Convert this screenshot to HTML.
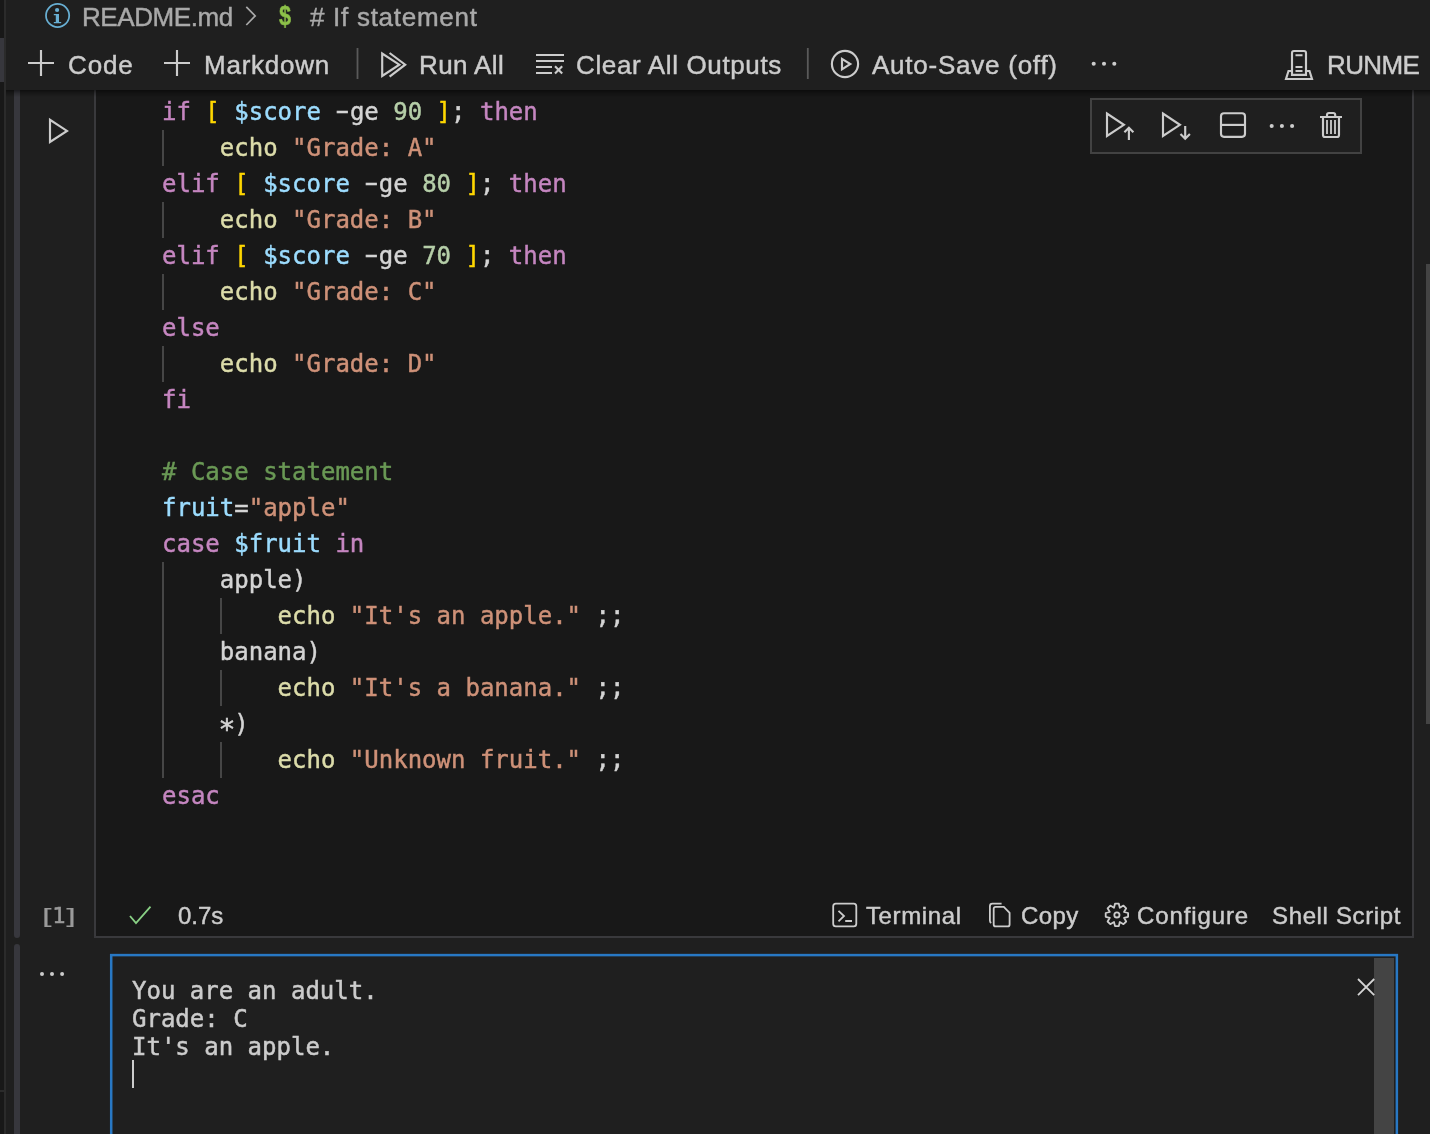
<!DOCTYPE html>
<html><head><meta charset="utf-8"><title>README.md</title>
<style>
*{box-sizing:border-box;margin:0;padding:0}
html,body{width:1430px;height:1134px;overflow:hidden;background:#1f1f1f}
body{position:relative;font-family:"Liberation Sans",sans-serif;color:#cccccc}
.abs{position:absolute}
.ui{will-change:transform;font-family:"Liberation Sans",sans-serif;-webkit-text-stroke:0.45px;font-size:26px;line-height:30px;color:#cccccc;white-space:pre;position:absolute;z-index:6}
.st{font-size:24px}
.mono{will-change:transform;font-family:"DejaVu Sans Mono","Liberation Mono",monospace}
#leftstrip{left:0;top:0;width:4px;height:1134px;background:#181818}
#leftborder{left:4px;top:0;width:2px;height:1134px;background:#2b2b2b}
#leftthumb{left:0;top:38px;width:4px;height:44px;background:#37373d}
#leftline{left:0;top:1090px;width:4px;height:2px;background:#2b2b2b}
#toolbar{left:6px;top:36px;width:1424px;height:53.5px;background:#1f1f1f;z-index:5}
#tshadow{left:6px;top:89.5px;width:1424px;height:7px;background:linear-gradient(rgba(0,0,0,.5),rgba(0,0,0,.22) 45%,rgba(0,0,0,0));z-index:5}
#celled{left:94px;top:80px;width:1320px;height:858px;background:#181818;border:2px solid #39393c}
#focus1{left:14px;top:80px;width:6px;height:858px;background:#37373d;border-radius:0 0 3px 3px}
#focus2{left:14px;top:944px;width:6px;height:200px;background:#37373d;border-radius:3px 3px 0 0}
#code{left:162px;top:94px;-webkit-text-stroke:0.45px;font-size:24px;line-height:36px;color:#d4d4d4;white-space:pre}
#code div{height:36px}
.k{color:#c586c0}.y{color:#ffd700}.v{color:#9cdcfe}.n{color:#b5cea8}.f{color:#dcdcaa}.s{color:#ce9178}.c{color:#6a9955}
.h{display:inline-block;transform:translateY(-0.6px) scaleX(1.7)}
.a{display:inline-block;transform:translate(-0.3px,5.6px) scale(1.17)}
.guide{position:absolute;width:2px;background:#464646}
#ctb{left:1090px;top:98px;width:272px;height:56px;border:2px solid #424242;background:#1f1f1f}
#out{left:110px;top:954px;width:1288px;height:200px;background:#1f1f1f}
#outscroll{left:1374px;top:958px;width:20px;height:180px;background:#444444}
#outtext{left:131.5px;top:976.5px;-webkit-text-stroke:0.5px;font-size:24px;line-height:28px;color:#cccccc;white-space:pre}
#cursor{left:132px;top:1060px;width:2px;height:28px;background:#cccccc}
#vscroll{left:1426px;top:264px;width:4px;height:460px;background:#444444}
svg{position:absolute;left:0;top:0;overflow:visible;z-index:7}
.s2{fill:none;stroke:#cccccc;stroke-width:2.15}
.s18{fill:none;stroke:#cccccc;stroke-width:1.8}
</style></head><body>
<div class="abs" id="leftstrip"></div><div class="abs" id="leftborder"></div><div class="abs" id="leftthumb"></div><div class="abs" id="leftline"></div>

<div class="abs" id="celled"></div>
<div class="abs" id="focus1"></div><div class="abs" id="focus2"></div>
<div class="abs" id="vscroll"></div>

<div class="abs mono" id="code"><div><span class="k">if</span> <span class="y">[</span> <span class="v">$score</span> <span class="h">-</span>ge <span class="n">90</span> <span class="y">]</span>; <span class="k">then</span></div><div>    <span class="f">echo</span> <span class="s">"Grade: A"</span></div><div><span class="k">elif</span> <span class="y">[</span> <span class="v">$score</span> <span class="h">-</span>ge <span class="n">80</span> <span class="y">]</span>; <span class="k">then</span></div><div>    <span class="f">echo</span> <span class="s">"Grade: B"</span></div><div><span class="k">elif</span> <span class="y">[</span> <span class="v">$score</span> <span class="h">-</span>ge <span class="n">70</span> <span class="y">]</span>; <span class="k">then</span></div><div>    <span class="f">echo</span> <span class="s">"Grade: C"</span></div><div><span class="k">else</span></div><div>    <span class="f">echo</span> <span class="s">"Grade: D"</span></div><div><span class="k">fi</span></div><div> </div><div><span class="c"># Case statement</span></div><div><span class="v">fruit</span>=<span class="s">"apple"</span></div><div><span class="k">case</span> <span class="v">$fruit</span> <span class="k">in</span></div><div>    apple)</div><div>        <span class="f">echo</span> <span class="s">"It's an apple."</span> ;;</div><div>    banana)</div><div>        <span class="f">echo</span> <span class="s">"It's a banana."</span> ;;</div><div>    <span class="a">*</span>)</div><div>        <span class="f">echo</span> <span class="s">"Unknown fruit."</span> ;;</div><div><span class="k">esac</span></div></div>

<div class="guide" style="left:162px;top:130px;height:36px"></div>
<div class="guide" style="left:162px;top:202px;height:36px"></div>
<div class="guide" style="left:162px;top:274px;height:36px"></div>
<div class="guide" style="left:162px;top:346px;height:36px"></div>
<div class="guide" style="left:162px;top:562px;height:216px"></div>
<div class="guide" style="left:220px;top:598px;height:36px"></div>
<div class="guide" style="left:220px;top:670px;height:36px"></div>
<div class="guide" style="left:220px;top:742px;height:36px"></div>

<div class="abs" id="ctb"></div>

<div class="abs" id="toolbar"></div><div class="abs" id="tshadow"></div>

<!-- breadcrumb -->
<div class="ui" style="left:82.4px;top:2px;color:#a9a9a9;letter-spacing:-0.42px">README.md</div>
<div class="ui" style="left:310.3px;top:2px;color:#a9a9a9;letter-spacing:0.72px"># If statement</div>
<div class="ui" style="left:278.5px;top:1px;color:#8dc149;font-weight:bold;font-size:27px;transform:scaleX(.8);transform-origin:0 0">$</div>

<!-- toolbar labels -->
<div class="ui" style="left:67.7px;top:50px;letter-spacing:0.87px">Code</div>
<div class="ui" style="left:204px;top:50px;letter-spacing:0.77px">Markdown</div>
<div class="ui" style="left:419.2px;top:50px;letter-spacing:0.38px">Run All</div>
<div class="ui" style="left:576.1px;top:50px;letter-spacing:0.64px">Clear All Outputs</div>
<div class="ui" style="left:872px;top:50px;letter-spacing:0.76px">Auto-Save (off)</div>
<div class="ui" style="left:1326.5px;top:50px;letter-spacing:-0.6px">RUNME</div>

<!-- status row -->
<div class="ui mono" style="left:38.6px;top:901px;font-size:22px;color:#9a9a9a;letter-spacing:0px;-webkit-text-stroke:0.55px"><span style="display:inline-block;-webkit-text-stroke:0.1px;transform:translate(1.4px,0.6px) scale(1.5,1.0)">[</span>1<span style="display:inline-block;-webkit-text-stroke:0.1px;transform:translate(-1.6px,0.6px) scale(1.5,1.0)">]</span></div>
<div class="ui st" style="left:177.8px;top:901px">0.7s</div>
<div class="ui st" style="left:866.4px;top:901px;letter-spacing:0.62px">Terminal</div>
<div class="ui st" style="left:1020.9px;top:901px;letter-spacing:0.4px">Copy</div>
<div class="ui st" style="left:1137.3px;top:901px;letter-spacing:0.88px">Configure</div>
<div class="ui st" style="left:1272px;top:901px;letter-spacing:0.64px">Shell Script</div>

<!-- output -->
<div class="abs" id="out"></div>
<div class="abs" id="outscroll"></div>
<div class="abs mono" id="outtext">You are an adult.
Grade: C
It's an apple.</div>
<div class="abs" id="cursor"></div>

<svg width="1430" height="1134" viewBox="0 0 1430 1134">
<!-- info icon -->
<circle cx="57.6" cy="15.5" r="11.6" fill="none" stroke="#68afd3" stroke-width="1.75"/>
<circle cx="57.1" cy="10" r="2.1" fill="#68afd3"/>
<path d="M53.8,14 H59 V22 H61.2 V23.2 H53.8 V22 H55.8 V15.2 H53.8Z" fill="#68afd3"/>
<!-- chevron -->
<path d="M246.3,6.8 L255.2,15.9 L246.3,25" fill="none" stroke="#a9a9a9" stroke-width="1.7"/>
<!-- plus icons -->
<path class="s2" d="M28,63 H54 M41,50 V76"/>
<path class="s2" d="M164,63 H190 M177,50 V76"/>
<!-- separators -->
<path d="M357.5,48 V79 M807.8,48 V79" stroke="#5a5a5a" stroke-width="1.8" fill="none"/>
<!-- run all -->
<path class="s2" d="M382.2,53.6 V76 L399.3,64.7Z"/>
<path class="s2" d="M389.6,53 L405.2,64.7 L389.6,76.7" />
<!-- clear all -->
<path class="s2" d="M536,55 H564 M536,61 H564 M536,67 H552 M536,73 H552 M555,66.3 L562.2,73.5 M562.2,66.3 L555,73.5"/>
<!-- circle play -->
<circle class="s2" cx="845" cy="64" r="13.1"/>
<path class="s2" d="M842,58.9 V69.3 L850.3,64Z"/>
<!-- toolbar dots -->
<circle cx="1093.7" cy="63.8" r="2.05" fill="#ccc"/><circle cx="1104" cy="63.8" r="2.05" fill="#ccc"/><circle cx="1114.3" cy="63.8" r="2.05" fill="#ccc"/>
<!-- runme icon -->
<path class="s2" d="M1292,74.8 V53 Q1292,51 1294,51 H1304 Q1306,51 1306,53 V74.8 Z"/>
<path class="s2" d="M1295.5,55.2 H1302.5 M1295.5,67 H1302.5 M1295.5,71 H1302.5"/>
<path class="s2" d="M1292,71 H1288.5 L1286,79 H1312 L1309.5,71 H1306"/>
<!-- gutter run -->
<path class="s2" d="M50,119.8 V142 L67,130.9Z"/>
<!-- cell toolbar: run above -->
<path class="s2" d="M1107,113.6 V136 L1123.9,124.8Z"/>
<path class="s2" d="M1128.9,140 V127.6 M1124.4,132.2 L1128.9,127.7 L1133.4,132.2"/>
<!-- run below -->
<path class="s2" d="M1163,113.6 V136 L1179.9,124.8Z"/>
<path class="s2" d="M1185.2,126 V138.6 M1180.5,134 L1185.2,138.7 L1189.9,134"/>
<!-- split -->
<rect class="s2" x="1221" y="113.2" width="24" height="23.6" rx="3"/>
<path class="s2" d="M1221,124.9 H1245"/>
<!-- cell dots -->
<circle cx="1271.7" cy="126" r="2.05" fill="#ccc"/><circle cx="1281.9" cy="126" r="2.05" fill="#ccc"/><circle cx="1292.1" cy="126" r="2.05" fill="#ccc"/>
<!-- trash -->
<path class="s2" d="M1320,117 H1342 M1327,117 V115 Q1327,113 1329,113 H1333.2 Q1335.2,113 1335.2,115 V117 M1323,117 V135 Q1323,137 1325,137 H1337 Q1339,137 1339,135 V117"/>
<path class="s18" d="M1327,120 V134 M1331,120 V134 M1335,120 V134"/>
<!-- check -->
<path d="M130,916 L136,923.2 L150.5,906.6" fill="none" stroke="#89d185" stroke-width="1.8"/>
<!-- terminal icon -->
<rect class="s18" x="833.2" y="903.7" width="23.1" height="22.7" rx="2.6"/>
<path class="s18" d="M838.5,910.8 L844,916 L838.5,921.3 M845.2,921 H852"/>
<!-- copy icon -->
<path class="s18" d="M995.7,906.8 H1003.8 L1009.6,912.8 V924.4 Q1009.6,926.4 1007.6,926.4 H995.7 Q993.7,926.4 993.7,924.4 V908.8 Q993.7,906.8 995.7,906.8Z"/>
<path class="s18" d="M1001.6,903.7 H992.4 Q989.9,903.7 989.9,906.2 V920.5 Q989.9,922.3 991.2,923"/>
<!-- gear -->
<path class="s18" stroke-linejoin="round" d="M1115.0,903.7 L1118.8,903.7 L1119.8,907.8 L1123.5,905.6 L1126.2,908.3 L1124.0,912.0 L1128.1,913.0 L1128.1,916.8 L1124.0,917.8 L1126.2,921.5 L1123.5,924.2 L1119.8,922.0 L1118.8,926.1 L1115.0,926.1 L1114.0,922.0 L1110.3,924.2 L1107.6,921.5 L1109.8,917.8 L1105.7,916.8 L1105.7,913.0 L1109.8,912.0 L1107.6,908.3 L1110.3,905.6 L1114.0,907.8Z"/>
<circle class="s18" cx="1116.9" cy="914.9" r="2.6"/>
<!-- output dots -->
<circle cx="42" cy="974.1" r="2" fill="#ccc"/><circle cx="52" cy="974.1" r="2" fill="#ccc"/><circle cx="62.1" cy="974.1" r="2" fill="#ccc"/>
<rect x="111.2" y="955.1" width="1285.65" height="300" fill="none" stroke="#2878c4" stroke-width="2.5"/>
<!-- close X -->
<path d="M1358,979 L1374.2,995.2 M1374.2,979 L1358,995.2" fill="none" stroke="#d4d4d4" stroke-width="1.8"/>
</svg>
</body></html>
